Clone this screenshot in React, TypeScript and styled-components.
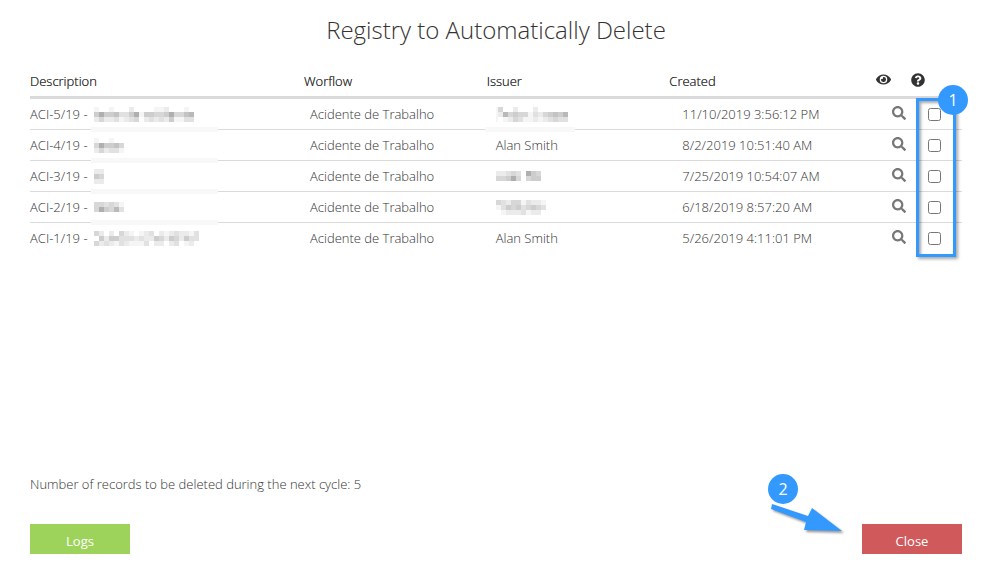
import React from "react";
import styled, { createGlobalStyle, css } from "styled-components";
import { FaEye, FaQuestionCircle, FaSearch } from "react-icons/fa";

const GlobalStyle = createGlobalStyle`
  *, *::before, *::after { box-sizing: border-box; }
  body {
    margin: 0;
    background: #fff;
    color: #333;
    font-family: "Open Sans", "Noto Sans", sans-serif;
    font-weight: 300;
    font-size: 13px;
    line-height: 20px;
  }
`;

const ACCENT = "#3399ff";
const RULE = "#dadada";
const CELL = 5;

const Page = styled.main`
  display: flex;
  flex-direction: column;
  min-height: 100vh;
  padding: 12px 30px 13px;
`;

const Title = styled.h1`
  margin: 0;
  font-size: 24px;
  line-height: 36px;
  font-weight: 300;
  text-align: center;
`;

const TableArea = styled.div`
  position: relative;
  margin-top: 20px;
`;

const Table = styled.table`
  width: 100%;
  table-layout: fixed;
  border-collapse: separate;
  border-spacing: 0;
`;

const Col = styled.col<{ $width?: string }>`
  width: ${(p) => p.$width ?? "auto"};
`;

const HeadCell = styled.th<{ $icon?: boolean }>`
  height: 31px;
  padding: 0 0 ${(p) => (p.$icon ? 5 : 2)}px;
  border-bottom: 3px solid ${RULE};
  text-align: left;
  font-weight: 300;
  text-shadow: 0 0 0 #333;
  white-space: nowrap;

  svg { display: block; }
`;

const Row = styled.tr`
  &:not(:last-child) > td {
    height: 31px;
    border-bottom: 1px solid ${RULE};
  }
`;

const Cell = styled.td<{ $indent?: number }>`
  position: relative;
  height: 30px;
  padding: 0 0 0 ${(p) => p.$indent ?? 0}px;
  white-space: nowrap;
`;

const CellContent = styled.div`
  display: flex;
  align-items: center;
  gap: 6px;
`;

const stripPlacement = {
  description: css`left: 61px; width: 127px;`,
  issuer: css`left: -2px; width: 90px;`,
};

const RuleStrip = styled.span<{ $column: keyof typeof stripPlacement }>`
  position: absolute;
  z-index: 1;
  bottom: -3px;
  height: 5px;
  background: #f8f8f8;
  ${(p) => stripPlacement[p.$column]}
`;

const SearchButton = styled.button`
  display: block;
  margin: 0 5px 2px auto;
  padding: 0;
  border: 0;
  background: none;
  color: #777;
  cursor: pointer;

  svg { display: block; }
`;

const Checkbox = styled.input`
  display: block;
  width: 13px;
  height: 13px;
  margin: 0;
`;

const Highlight = styled.div`
  position: absolute;
  z-index: 2;
  top: 30px;
  right: 6px;
  bottom: -4px;
  width: 40px;
  border: 3px solid ${ACCENT};
  box-shadow: 2px 2px 3px rgba(0, 0, 0, 0.35), inset 2px 2px 3px rgba(0, 0, 0, 0.35);
  pointer-events: none;
`;

const Badge = styled.span`
  display: grid;
  place-items: center;
  width: 30px;
  height: 30px;
  border-radius: 50%;
  background: ${ACCENT};
  color: #fff;
  font-size: 16px;
  font-weight: 400;
`;

const HighlightBadge = styled(Badge)`
  position: absolute;
  top: -16px;
  right: -15px;
`;

const Summary = styled.p`
  margin: auto 0 30px;
`;

const Footer = styled.footer`
  position: relative;
  display: flex;
  justify-content: space-between;
`;

const ActionButton = styled.button<{ $tone: "success" | "danger" }>`
  width: 100px;
  height: 30px;
  padding: 4px 0 0;
  border: 0;
  background: ${(p) => (p.$tone === "success" ? "#9dd35b" : "#d05a5b")};
  color: #fff;
  font: inherit;
  font-weight: 400;
  cursor: pointer;
`;

const Pointer = styled.div`
  position: absolute;
  right: 117px;
  bottom: 18px;
  width: 77px;
  height: 62px;
  pointer-events: none;
`;

const PointerArrow = styled.svg`
  display: block;
  width: 77px;
  height: 32px;
  filter: drop-shadow(2px 2px 1px rgba(0, 0, 0, 0.4));
`;

const shade = (level: number) => {
  const v = 255 - level * 10;
  return `rgb(${v},${v},${v})`;
};

function Mosaic({ cells, cut = 0 }: { cells: string[]; cut?: number }) {
  const width = cells[0].length * CELL - cut;
  const height = cells.length * CELL;
  return (
    <svg
      width={width}
      height={height}
      viewBox={`${cut} 0 ${width} ${height}`}
      shapeRendering="crispEdges"
      role="img"
      aria-label="Redacted"
    >
      {cells.flatMap((line, y) =>
        [...line].map((level, x) => (
          <rect
            key={`${x}-${y}`}
            x={x * CELL}
            y={y * CELL}
            width={CELL}
            height={CELL}
            fill={shade(Number(level))}
          />
        ))
      )}
    </svg>
  );
}

type Entry = {
  id: string;
  detail: string[];
  issuer: string | string[];
  issuerCut?: number;
  strip?: boolean;
  created: string;
};

const entries: Entry[] = [
  {
    id: "ACI-5/19",
    detail: ["10010002000011200010", "58556335815544584467", "24223123402323251133"],
    issuer: ["140020002000000", "127454413245657", "101243112123433"],
    issuerCut: 3,
    strip: true,
    created: "11/10/2019 3:56:12 PM",
  },
  {
    id: "ACI-4/19",
    detail: ["100100", "485564", "242331"],
    issuer: "Alan Smith",
    created: "8/2/2019 10:51:40 AM",
  },
  {
    id: "ACI-3/19",
    detail: ["22", "54", "22"],
    issuer: ["223430854", "445840455"],
    created: "7/25/2019 10:54:07 AM",
  },
  {
    id: "ACI-2/19",
    detail: ["443431", "485473"],
    issuer: ["4324413221", "1354534543", "0122231220"],
    created: "6/18/2019 8:57:20 AM",
  },
  {
    id: "ACI-1/19",
    detail: ["420204210123021232213", "052553332322542542533", "423213211130220230120"],
    issuer: "Alan Smith",
    created: "5/26/2019 4:11:01 PM",
  },
];

export default function App() {
  return (
    <>
      <GlobalStyle />
      <Page>
        <Title>Registry to Automatically Delete</Title>
        <TableArea>
          <Table>
            <colgroup>
              <Col $width="29.4%" />
              <Col $width="19.6%" />
              <Col $width="19.6%" />
              <Col />
              <Col $width="35px" />
              <Col $width="51px" />
            </colgroup>
            <thead>
              <tr>
                <HeadCell>Description</HeadCell>
                <HeadCell>Worflow</HeadCell>
                <HeadCell>Issuer</HeadCell>
                <HeadCell>Created</HeadCell>
                <HeadCell $icon aria-label="View"><FaEye size={15} /></HeadCell>
                <HeadCell $icon aria-label="Help"><FaQuestionCircle size={14} /></HeadCell>
              </tr>
            </thead>
            <tbody>
              {entries.map((entry, i) => (
                <Row key={entry.id}>
                  <Cell>
                    <CellContent>
                      {entry.id} - <Mosaic cells={entry.detail} />
                    </CellContent>
                    {i < entries.length - 1 && <RuleStrip $column="description" />}
                  </Cell>
                  <Cell $indent={6}>Acidente de Trabalho</Cell>
                  <Cell $indent={9}>
                    <CellContent>
                      {typeof entry.issuer === "string" ? (
                        entry.issuer
                      ) : (
                        <Mosaic cells={entry.issuer} cut={entry.issuerCut} />
                      )}
                    </CellContent>
                    {entry.strip && <RuleStrip $column="issuer" />}
                  </Cell>
                  <Cell $indent={13}>{entry.created}</Cell>
                  <Cell>
                    <SearchButton type="button" aria-label={`View ${entry.id}`}>
                      <FaSearch size={14} />
                    </SearchButton>
                  </Cell>
                  <Cell $indent={17}>
                    <Checkbox type="checkbox" aria-label={`Select ${entry.id}`} />
                  </Cell>
                </Row>
              ))}
            </tbody>
          </Table>
          <Highlight>
            <HighlightBadge>1</HighlightBadge>
          </Highlight>
        </TableArea>
        <Summary>Number of records to be deleted during the next cycle: 5</Summary>
        <Footer>
          <ActionButton type="button" $tone="success">Logs</ActionButton>
          <Pointer>
            <Badge>2</Badge>
            <PointerArrow viewBox="0 0 77 32" aria-hidden="true">
              <path d="M4 0 L40 12 L44 4 L74 27 L36 26 L38 18 L3 5 Z" fill={ACCENT} />
            </PointerArrow>
          </Pointer>
          <ActionButton type="button" $tone="danger">Close</ActionButton>
        </Footer>
      </Page>
    </>
  );
}
